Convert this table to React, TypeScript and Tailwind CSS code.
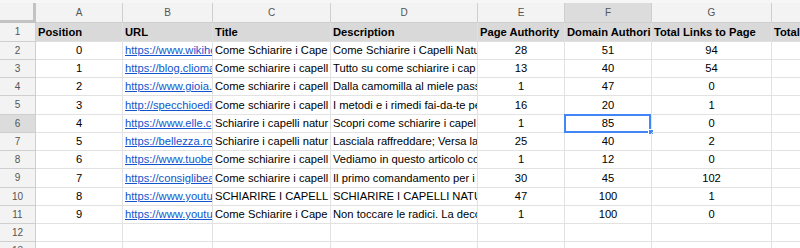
import React from 'react';

const cols = [
  { key: 'A', w: 87, align: 'center' },
  { key: 'B', w: 90, align: 'left' },
  { key: 'C', w: 118, align: 'left' },
  { key: 'D', w: 147, align: 'left' },
  { key: 'E', w: 87, align: 'center' },
  { key: 'F', w: 87, align: 'center' },
  { key: 'G', w: 120, align: 'center' },
  { key: 'H', w: 80, align: 'left' },
];

const header = ['Position', 'URL', 'Title', 'Description', 'Page Authority', 'Domain Authori', 'Total Links to Page', 'Total'];

// text cut to what the sheet shows in each cell
const rows: string[][] = [
  ['0', 'https://www.wikiho', 'Come Schiarire i Cape', 'Come Schiarire i Capelli Natu', '28', '51', '94', ''],
  ['1', 'https://blog.clioma', 'Come schiarire i capell', 'Tutto su come schiarire i cap', '13', '40', '54', ''],
  ['2', 'https://www.gioia.', 'Come schiarire i capell', 'Dalla camomilla al miele pass', '1', '47', '0', ''],
  ['3', 'http://specchioedi', 'Come schiarire i capell', 'I metodi e i rimedi fai-da-te pe', '16', '20', '1', ''],
  ['4', 'https://www.elle.c', 'Schiarire i capelli natur', 'Scopri come schiarire i capel', '1', '85', '0', ''],
  ['5', 'https://bellezza.ro', 'Schiarire i capelli natur', 'Lasciala raffreddare; Versa la', '25', '40', '2', ''],
  ['6', 'https://www.tuobe', 'Come schiarire i capell', 'Vediamo in questo articolo co', '1', '12', '0', ''],
  ['7', 'https://consiglibea', 'Come schiarire i capell', 'Il primo comandamento per i', '30', '45', '102', ''],
  ['8', 'https://www.youtu', 'SCHIARIRE I CAPELL', 'SCHIARIRE I CAPELLI NATU', '47', '100', '1', ''],
  ['9', 'https://www.youtu', 'Come Schiarire i Cape', 'Non toccare le radici. La deco', '1', '100', '0', ''],
  ['', '', '', '', '', '', '', ''],
  ['', '', '', '', '', '', '', ''],
];

// rows drift a little over 18px each
const rowH = (n: number) => (n % 4 === 1 ? 'h-[19px] leading-[18px]' : 'h-[18px] leading-[17px]');

export default function App() {
  return (
    <div
      className="w-[800px] h-[248px] overflow-hidden bg-white text-[11.2px] text-black"
      style={{ fontFamily: '"Liberation Sans", Arial, sans-serif' }}
    >
      <div className="h-[3px] bg-[#f6f6f6]" />
      {/* column letters */}
      <div className="flex h-[20px]">
        <div className="w-[36px] shrink-0 bg-[#f3f3f3] border-r-[3px] border-b-[3px] border-[#c3c3c3]" />
        {cols.map((c) => (
          <div
            key={c.key}
            style={{ width: c.w }}
            className={`shrink-0 flex items-center justify-center text-[10px] text-[#555] border-r border-b border-[#cfcfcf] ${
              c.key === 'F' ? 'bg-[#dcdcdc]' : 'bg-[#f3f3f3]'
            }`}
          >
            {c.key}
          </div>
        ))}
      </div>
      {/* header row */}
      <div className={`flex ${rowH(1)}`}>
        <div className="w-[36px] shrink-0 flex items-center justify-center text-[10px] text-[#555] bg-[#f3f3f3] border-r border-b border-[#cfcfcf]">
          1
        </div>
        {cols.map((c, i) => (
          <div
            key={c.key}
            style={{ width: c.w }}
            className="shrink-0 overflow-hidden whitespace-nowrap bg-[#d9d9d9] font-bold px-[2px] border-r border-b border-[#e0e0e0]"
          >
            {header[i]}
          </div>
        ))}
      </div>
      {rows.map((r, ri) => {
        const rowNum = ri + 2;
        return (
          <div key={ri} className={`flex ${rowH(rowNum)}`}>
            <div
              className={`w-[36px] shrink-0 flex items-center justify-center text-[10px] text-[#555] border-r border-b border-[#cfcfcf] ${
                rowNum === 6 ? 'bg-[#dcdcdc]' : 'bg-[#f3f3f3]'
              }`}
            >
              {rowNum}
            </div>
            {cols.map((c, ci) => {
              const selected = rowNum === 6 && c.key === 'F';
              return (
                <div
                  key={c.key}
                  style={{ width: c.w }}
                  className={`relative shrink-0 whitespace-nowrap px-[2px] border-r border-b border-[#e2e2e2] ${
                    selected ? '' : 'overflow-hidden'
                  } ${c.align === 'center' ? 'text-center' : 'text-left'}`}
                >
                  {c.key === 'B' && r[ci] ? (
                    <span className="text-[#1155cc] underline">{r[ci]}</span>
                  ) : (
                    r[ci]
                  )}
                  {selected && (
                    <>
                      <div className="absolute -left-px -top-px w-[calc(100%+1px)] h-[19px] border-2 border-[#4285f4] pointer-events-none" />
                      <div className="absolute -right-[3px] bottom-[-3px] w-[6px] h-[6px] bg-[#4285f4] border border-white" />
                    </>
                  )}
                </div>
              );
            })}
          </div>
        );
      })}
    </div>
  );
}
